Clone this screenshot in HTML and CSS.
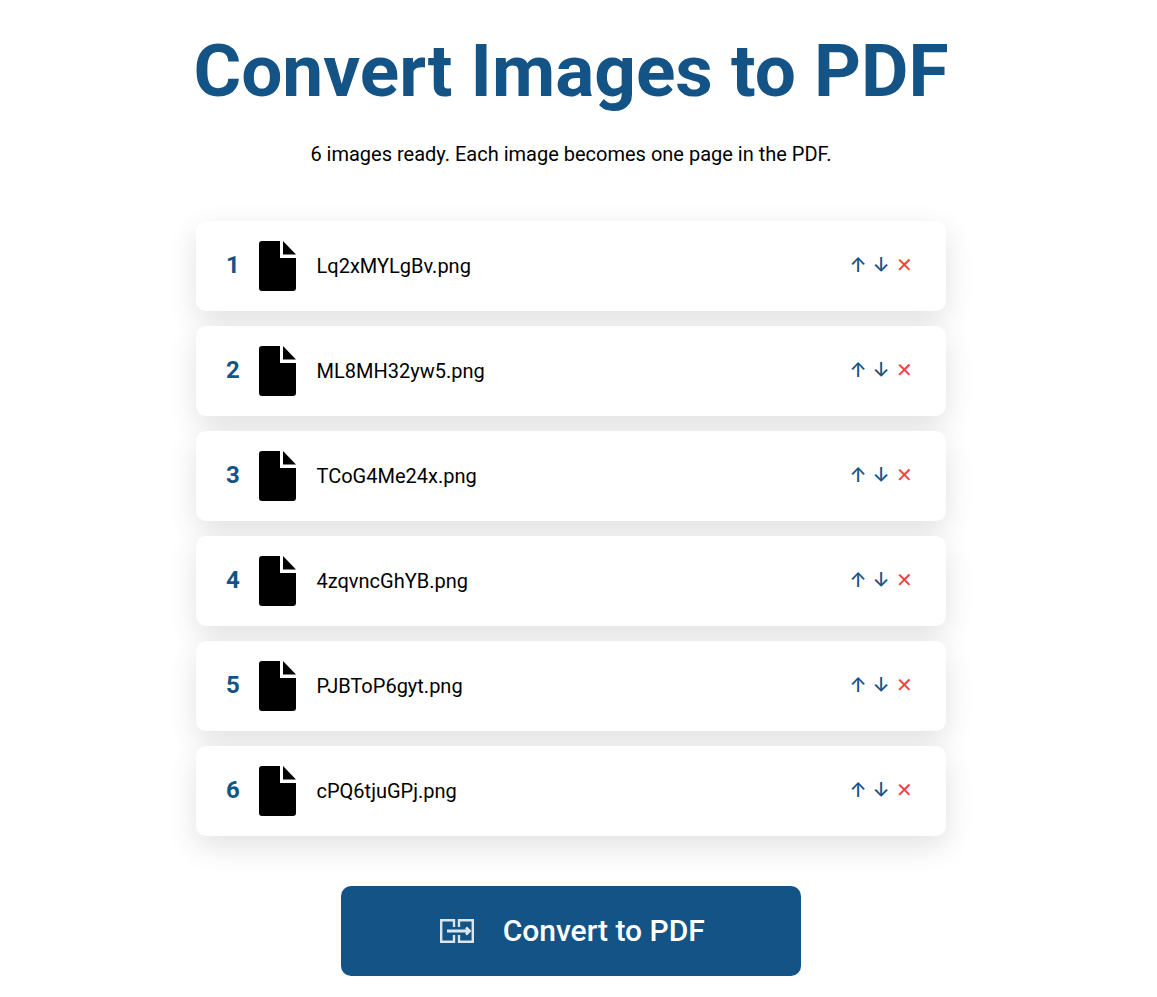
FILE: index.html
```html
<!DOCTYPE html>
<html lang="en">
  <head>
    <meta charset="UTF-8" />
    <meta name="viewport" content="width=device-width, initial-scale=1.0" />
    <title>Convert Images to PDF</title>
    <link rel="stylesheet" href="styles.css">
  </head>

  <body>
    <main class="page">
      <h1>Convert Images to PDF</h1>
      <p class="status">6 images ready. Each image becomes one page in the PDF.</p>

      <ul class="file-list">
        <li class="file-row">
          <span class="file-num">1</span>
          <svg class="file-icon" viewBox="0 0 37 50"><path d="M3 0H21V17H37V47a3 3 0 0 1-3 3H3a3 3 0 0 1-3-3V3a3 3 0 0 1 3-3ZM24 0L37 13.500H24Z"/></svg>
          <span class="file-name">Lq2xMYLgBv.png</span>
          <div class="file-actions"><button type="button" class="btn-move">↑</button><button type="button" class="btn-move">↓</button><button type="button" class="btn-remove">✕</button></div>
        </li>
        <li class="file-row">
          <span class="file-num">2</span>
          <svg class="file-icon" viewBox="0 0 37 50"><path d="M3 0H21V17H37V47a3 3 0 0 1-3 3H3a3 3 0 0 1-3-3V3a3 3 0 0 1 3-3ZM24 0L37 13.500H24Z"/></svg>
          <span class="file-name">ML8MH32yw5.png</span>
          <div class="file-actions"><button type="button" class="btn-move">↑</button><button type="button" class="btn-move">↓</button><button type="button" class="btn-remove">✕</button></div>
        </li>
        <li class="file-row">
          <span class="file-num">3</span>
          <svg class="file-icon" viewBox="0 0 37 50"><path d="M3 0H21V17H37V47a3 3 0 0 1-3 3H3a3 3 0 0 1-3-3V3a3 3 0 0 1 3-3ZM24 0L37 13.500H24Z"/></svg>
          <span class="file-name">TCoG4Me24x.png</span>
          <div class="file-actions"><button type="button" class="btn-move">↑</button><button type="button" class="btn-move">↓</button><button type="button" class="btn-remove">✕</button></div>
        </li>
        <li class="file-row">
          <span class="file-num">4</span>
          <svg class="file-icon" viewBox="0 0 37 50"><path d="M3 0H21V17H37V47a3 3 0 0 1-3 3H3a3 3 0 0 1-3-3V3a3 3 0 0 1 3-3ZM24 0L37 13.500H24Z"/></svg>
          <span class="file-name">4zqvncGhYB.png</span>
          <div class="file-actions"><button type="button" class="btn-move">↑</button><button type="button" class="btn-move">↓</button><button type="button" class="btn-remove">✕</button></div>
        </li>
        <li class="file-row">
          <span class="file-num">5</span>
          <svg class="file-icon" viewBox="0 0 37 50"><path d="M3 0H21V17H37V47a3 3 0 0 1-3 3H3a3 3 0 0 1-3-3V3a3 3 0 0 1 3-3ZM24 0L37 13.500H24Z"/></svg>
          <span class="file-name">PJBToP6gyt.png</span>
          <div class="file-actions"><button type="button" class="btn-move">↑</button><button type="button" class="btn-move">↓</button><button type="button" class="btn-remove">✕</button></div>
        </li>
        <li class="file-row">
          <span class="file-num">6</span>
          <svg class="file-icon" viewBox="0 0 37 50"><path d="M3 0H21V17H37V47a3 3 0 0 1-3 3H3a3 3 0 0 1-3-3V3a3 3 0 0 1 3-3ZM24 0L37 13.500H24Z"/></svg>
          <span class="file-name">cPQ6tjuGPj.png</span>
          <div class="file-actions"><button type="button" class="btn-move">↑</button><button type="button" class="btn-move">↓</button><button type="button" class="btn-remove">✕</button></div>
        </li>
      </ul>

      <button type="button" class="btn-convert">
        <svg class="convert-icon" viewBox="0 0 34 24" fill="none" stroke="currentColor" stroke-width="2.400"><path d="M14 8V1.200H1.200V22.800H14V16M19 8V1.200H32.800V22.800H19V16"/><path stroke-width="2.800" d="M7 12H29M26 8.500L29.500 12L26 15.500"/></svg>
        <span class="convert-label">Convert to PDF</span>
      </button>
    </main>
  </body>
</html>
```

FILE: styles.css
```css
html {
  font-size: 10px;
}

body {
  margin: 0;
  padding-right: 15px;
  background: #fff;
  color: #000;
  font-family: Roboto, "Liberation Sans", sans-serif;
}

ul,
li {
  list-style: none;
  margin: 0;
  padding: 0;
}

button {
  cursor: pointer;
  border: none;
  font-family: inherit;
}

.page {
  display: flex;
  flex-direction: column;
  align-items: center;
  width: 750px;
  margin: 0 auto;
}

h1 {
  margin: 24px 0 0;
  font-size: 73px;
  line-height: 94px;
  font-weight: 700;
  white-space: nowrap;
  color: #145385;
}

.status {
  margin: 23px 0 0;
  font-size: 20px;
  line-height: 26px;
}

/* file list */
.file-list {
  display: flex;
  flex-direction: column;
  gap: 15px;
  width: 100%;
  margin-top: 54px;
}

.file-row {
  display: flex;
  align-items: center;
  height: 90px;
  padding: 0 30px;
  border-radius: 10px;
  background: #fff;
  box-shadow: 0 10px 30px rgba(0, 0, 0, 0.12);
}

.file-num {
  width: 33px;
  margin-bottom: 2px;
  font-size: 24px;
  font-weight: 700;
  color: #145385;
}

.file-icon {
  width: 37px;
  height: 50px;
  margin-right: 20.5px;
}

.file-name {
  font-size: 20px;
}

.file-actions {
  display: flex;
  gap: 3px;
  margin-left: auto;
  margin-right: 2px;
  margin-bottom: 2px;
  font-family: Inter, sans-serif;
}

.file-actions button {
  padding: 0;
  width: 20px;
  background: none;
  font-family: inherit;
  font-size: 20px;
  font-weight: 500;
  line-height: 26px;
  text-align: center;
}

.btn-move {
  color: #145385;
}

.btn-remove {
  color: #ef4444;
}

/* convert */
.btn-convert {
  display: flex;
  align-items: center;
  justify-content: center;
  gap: 29px;
  width: 460px;
  height: 90px;
  margin-top: 50px;
  padding: 0 0 0 2.5px;
  border-radius: 10px;
  background: #145385;
  color: #fff;
  font-size: 30px;
  font-weight: 500;
}

.convert-label {
  margin-bottom: 2px;
}

.convert-icon {
  width: 34px;
  height: 24px;
  opacity: 0.85;
}
```
